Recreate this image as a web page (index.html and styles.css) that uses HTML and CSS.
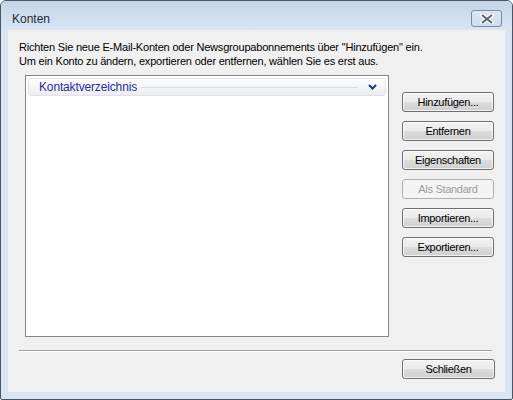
FILE: index.html
```html
<!DOCTYPE html>
<html>
<head>
<meta charset="utf-8">
<link rel="stylesheet" href="styles.css">
</head>
<body>
<div class="window">
  <div class="titlebar">
    <span class="title">Konten</span>
    <span class="close">
      <svg width="14" height="10" viewBox="0 0 14 10"><path d="M2 1 L12 9 M12 1 L2 9" stroke="#fff" stroke-width="4" stroke-linecap="square"/><path d="M2 1 L12 9 M12 1 L2 9" stroke="#5a6470" stroke-width="2"/></svg>
    </span>
  </div>
  <div class="client">
    <p class="intro">Richten Sie neue E-Mail-Konten oder Newsgroupabonnements über "Hinzufügen" ein.<br>Um ein Konto zu ändern, exportieren oder entfernen, wählen Sie es erst aus.</p>
    <div class="main">
      <div class="listbox">
        <div class="group">
          <span class="group-label">Kontaktverzeichnis</span>
          <span class="group-line"></span>
          <svg class="chev" width="9" height="6" viewBox="0 0 9 6"><path d="M1 1 L4.5 4.5 L8 1" fill="none" stroke="#1d3a8a" stroke-width="2"/></svg>
        </div>
      </div>
      <div class="buttons">
        <button class="btn">Hinzufügen...</button>
        <button class="btn">Entfernen</button>
        <button class="btn">Eigenschaften</button>
        <button class="btn disabled">Als Standard</button>
        <button class="btn">Importieren...</button>
        <button class="btn">Exportieren...</button>
      </div>
    </div>
    <div class="separator"></div>
    <div class="footer">
      <button class="btn">Schließen</button>
    </div>
  </div>
</div>
</body>
</html>
```

FILE: styles.css
```css
html, body {
  margin: 0;
  padding: 0;
  background: #ffffff;
}
.window {
  width: 511px;
  height: 398px;
  border: 1px solid #4b5563;
  border-radius: 6px 6px 2px 2px;
  background: #d9e5f2;
  display: flex;
  flex-direction: column;
  font-family: "Liberation Sans", Arial, sans-serif;
  overflow: hidden;
}
.titlebar {
  height: 20px;
  flex: none;
  display: flex;
  align-items: flex-start;
  justify-content: space-between;
  padding: 9px 10px 0 11px;
  background: linear-gradient(to bottom, #c4d4e6 0%, #cddbec 40%, #d9e5f2 100%);
}
.title {
  font-size: 12px;
  line-height: 14px;
  margin-top: 2px;
  color: #262b38;
}
.close {
  width: 29px;
  height: 15px;
  border: 1px solid #7d8aa0;
  border-radius: 3px;
  background: linear-gradient(to bottom, #dde6f1, #cfdbea);
  display: flex;
  align-items: center;
  justify-content: center;
}
.client {
  flex: 1;
  margin: 0 7px 7px 7px;
  background: #f0f0f0;
  display: flex;
  flex-direction: column;
}
.intro {
  margin: 10px 0 0 11px;
  font-size: 11px;
  line-height: 14px;
  letter-spacing: -0.2px;
  color: #000;
}
.main {
  display: flex;
  margin-top: 7px;
}
.listbox {
  margin-left: 17px;
  width: 358px;
  height: 258px;
  border: 1px solid #828790;
  background: #fff;
  padding: 2px 2px 0 2px;
}
.group {
  height: 16px;
  border: 1px solid #dfe3e8;
  border-radius: 3px;
  background: linear-gradient(to bottom, #fdfdfd, #ecedef);
  display: flex;
  align-items: center;
  padding: 0 8px 0 10px;
}
.group-label {
  font-size: 12px;
  color: #2a2aa6;
  letter-spacing: -0.15px;
}
.group-line {
  flex: 1;
  height: 1px;
  background: #d6dde4;
  margin: 0 10px 0 4px;
}
.chev {
  display: block;
}
.buttons {
  margin-left: 13px;
  margin-top: 17px;
  display: flex;
  flex-direction: column;
  gap: 9px;
}
.btn {
  width: 92px;
  height: 20px;
  box-sizing: border-box;
  border: 1px solid #707070;
  border-radius: 3px;
  background: linear-gradient(to bottom, #f2f2f2 0%, #ebebeb 50%, #dddddd 51%, #cfcfcf 100%);
  box-shadow: inset 0 0 0 1px rgba(255,255,255,0.7);
  font-family: "Liberation Sans", Arial, sans-serif;
  font-size: 11px;
  color: #000;
  padding: 0;
  letter-spacing: -0.3px;
}
.btn.disabled {
  border-color: #adb2b5;
  background: #f4f4f4;
  box-shadow: none;
  color: #9c9c9c;
}
.separator {
  margin: 13px 13px 0 11px;
  height: 1px;
  background: #a0a0a0;
  border-bottom: 1px solid #ffffff;
}
.footer {
  display: flex;
  justify-content: flex-end;
  padding: 7px 10px 0 0;
}
.footer .btn {
  width: 93px;
}
```
